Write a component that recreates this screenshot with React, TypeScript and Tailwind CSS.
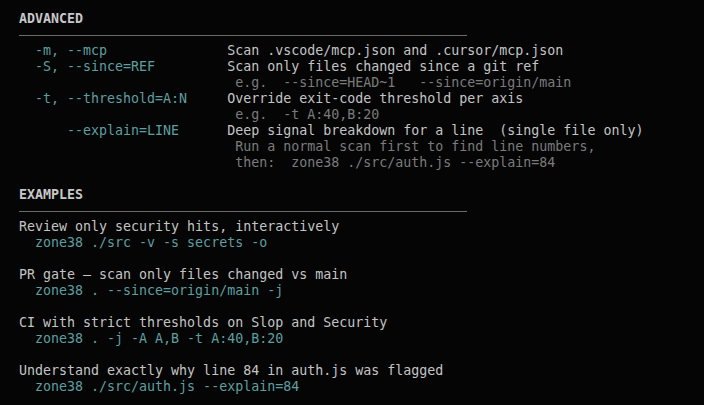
const flag = "text-[#5f9ea0]";
const desc = "text-[#c4c4c4]";
const dim = "text-[#7b7b7b]";

type Seg = [string, string];

const Line = ({ segs }: { segs?: Seg[] }) => (
  <div className="h-4 whitespace-pre">
    {segs?.map(([cls, text], i) => (
      <span key={i} className={cls}>
        {text}
      </span>
    ))}
  </div>
);

const Heading = ({ title }: { title: string }) => (
  <>
    <div className="h-4 whitespace-pre font-bold text-[#c8c8c8]">{title}</div>
    <div className="flex h-4 w-[448px] items-center">
      <div className="h-px w-full bg-[#6b6b6b]" />
    </div>
  </>
);

const pad = (s: string, n: number) => s + " ".repeat(Math.max(0, n - s.length));

const options: { f?: string; d: string; hint?: boolean }[] = [
  { f: "  -m, --mcp", d: "Scan .vscode/mcp.json and .cursor/mcp.json" },
  { f: "  -S, --since=REF", d: "Scan only files changed since a git ref" },
  { d: " e.g.  --since=HEAD~1   --since=origin/main", hint: true },
  { f: "  -t, --threshold=A:N", d: "Override exit-code threshold per axis" },
  { d: " e.g.  -t A:40,B:20", hint: true },
  { f: "      --explain=LINE", d: "Deep signal breakdown for a line  (single file only)" },
  { d: " Run a normal scan first to find line numbers,", hint: true },
  { d: " then:  zone38 ./src/auth.js --explain=84", hint: true },
];

const examples = [
  ["Review only security hits, interactively", "zone38 ./src -v -s secrets -o"],
  ["PR gate — scan only files changed vs main", "zone38 . --since=origin/main -j"],
  ["CI with strict thresholds on Slop and Security", "zone38 . -j -A A,B -t A:40,B:20"],
  ["Understand exactly why line 84 in auth.js was flagged", "zone38 ./src/auth.js --explain=84"],
];

export default function App() {
  return (
    <div className="h-[405px] w-[704px] overflow-hidden bg-[#050506] pl-[19px] pt-[11px] font-['DejaVu_Sans_Mono',monospace] text-[13.3px] leading-4">
      <Heading title="ADVANCED" />
      {options.map((o, i) => (
        <Line
          key={i}
          segs={[
            [flag, pad(o.f ?? "", 26)],
            [o.hint ? dim : desc, o.d],
          ]}
        />
      ))}
      <Line />
      <Heading title="EXAMPLES" />
      {examples.map(([title, cmd], i) => (
        <div key={i}>
          <Line segs={[[desc, title]]} />
          <Line segs={[[flag, "  " + cmd]]} />
          {i < examples.length - 1 && <Line />}
        </div>
      ))}
    </div>
  );
}
